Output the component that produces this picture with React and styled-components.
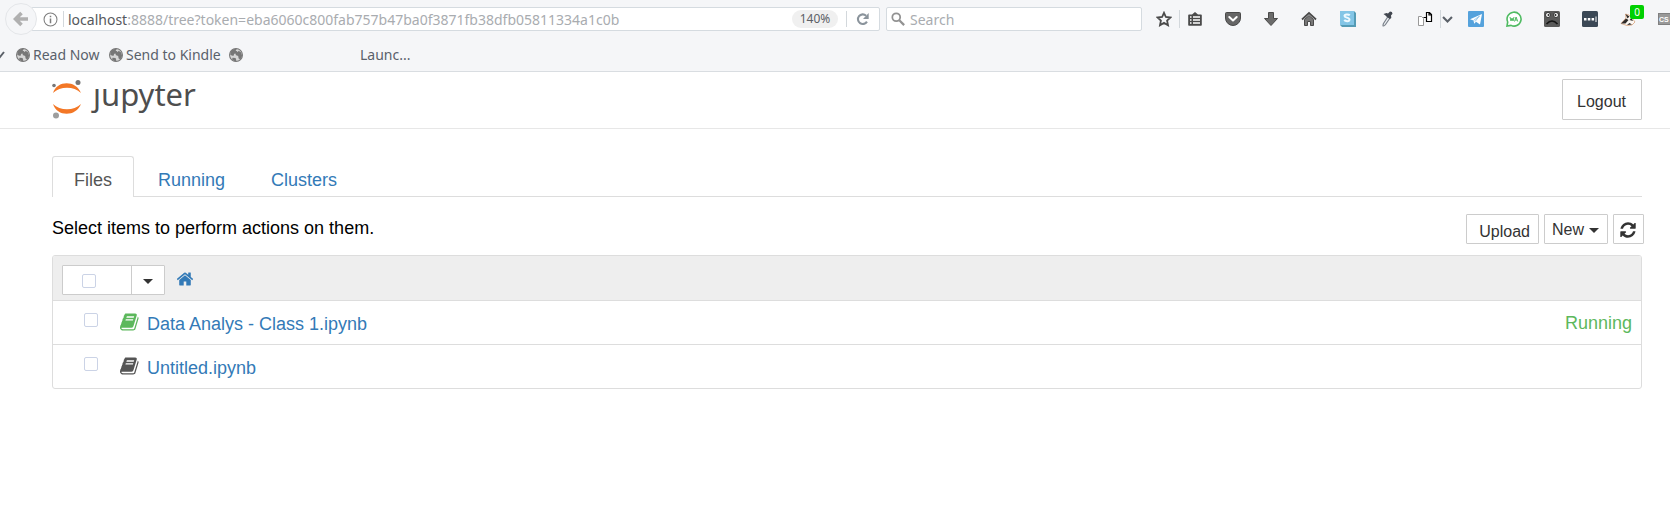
import React from "react";
import styled, { createGlobalStyle, css } from "styled-components";

const GlobalStyle = createGlobalStyle`
  * { box-sizing: border-box; }
  body { margin: 0; background: #fff; font-family: "Liberation Sans", Arial, sans-serif; font-size: 18px; color: #000; }
  button, input { font-family: inherit; margin: 0; }
  a { text-decoration: none; }
  svg { display: block; flex: none; }
`;

/* ---------- browser chrome ---------- */

const Chrome = styled.div`
  height: 72px;
  background: #f5f6f8;
  border-bottom: 1px solid #d9dde1;
  font-family: "Noto Sans", sans-serif;
  font-size: 14px;
  color: #5a616b;
  overflow: hidden;
`;

const NavBar = styled.div`
  display: flex;
  align-items: center;
  height: 38px;
  padding-left: 5px;
`;

const BackButton = styled.button`
  display: grid;
  place-items: center;
  flex: none;
  width: 32px;
  height: 32px;
  padding: 0;
  margin-right: -6px;
  border: 1px solid #e4e6e9;
  border-radius: 50%;
  background: #f5f6f8;
  z-index: 1;
`;

const Field = styled.div`
  display: flex;
  align-items: center;
  height: 24px;
  border: 1px solid #d5dbe0;
  border-radius: 2px;
  background: #fff;
`;

const AddressField = styled(Field)`
  flex: 836 1 0;
  padding-left: 11px;
  min-width: 0;
`;

const SearchField = styled(Field)`
  flex: 250 1 0;
  margin-left: 6px;
  padding-left: 4px;
  gap: 5px;
  min-width: 0;
`;

const Divider = styled.span`
  flex: none;
  width: 1px;
  height: ${(p) => p.$h || 16}px;
  background: #d3d8dc;
`;

const Address = styled.div`
  flex: 1;
  min-width: 0;
  padding-left: 5px;
  margin-left: 5px;
  background: linear-gradient(#d3d8dc, #d3d8dc) no-repeat left center / 1px 16px;
  overflow: hidden;
  white-space: nowrap;
  color: #a9acb0;
`;

const Host = styled.span`
  color: #55585c;
`;

const ZoomBadge = styled.button`
  width: 46px;
  height: 18px;
  padding: 0;
  margin-right: 8px;
  border: 0;
  border-radius: 9px;
  background: #f0f0f0;
  color: #5c6066;
  font-size: 12px;
  line-height: 18px;
`;

const PlainButton = styled.button`
  display: grid;
  place-items: center;
  flex: none;
  width: ${(p) => p.$w || 16}px;
  height: 24px;
  padding: 0;
  border: 0;
  background: none;
  position: relative;
`;

const SearchInput = styled.input`
  flex: 1;
  min-width: 0;
  padding: 0;
  border: 0;
  outline: 0;
  background: none;
  font-size: 14px;
  &::placeholder { color: #a9acb0; opacity: 1; }
`;

const Extensions = styled.div`
  display: flex;
  align-items: center;
  flex: none;
  gap: 22px;
  width: 528px;
  padding-left: 14px;
  overflow: hidden;
  height: 38px;
`;

const Pair = styled.div`
  display: flex;
  align-items: center;
  gap: 7px;
`;

const SplitButton = styled(Pair)`
  margin-right: -7px;
`;

const SplitMenu = styled.button`
  display: grid;
  place-items: center;
  width: 13px;
  height: 18px;
  padding: 0 0 0 1px;
  border: 0;
  border-left: 1px solid #d3d8dc;
  background: none;
`;

const Badge = styled.span`
  position: absolute;
  left: 10px;
  top: -2px;
  width: 14px;
  height: 14px;
  border-radius: 2px;
  background: #00d000;
  color: #fff;
  font-size: 10px;
  line-height: 14px;
  text-align: center;
`;

const Bookmarks = styled.nav`
  display: flex;
  align-items: center;
  height: 33px;
`;

const Bookmark = styled.a`
  display: flex;
  align-items: center;
  gap: 3px;
  width: ${(p) => p.$w}px;
  color: inherit;
  white-space: nowrap;
`;

/* ---------- notebook page ---------- */

const Header = styled.header`
  display: flex;
  justify-content: space-between;
  align-items: flex-start;
  height: 57px;
  padding: 0 28px 0 52px;
  border-bottom: 1px solid #e7e7e7;
`;

const Brand = styled.a`
  display: flex;
  gap: 11px;
  color: #4e4e4e;
  svg { margin-top: 7px; }
`;

/* The wordmark's first letter has no dot: the planet of the mark stands for it. */
const Wordmark = styled.span`
  position: relative;
  font-family: "Noto Sans", sans-serif;
  font-size: 31px;
  line-height: 44px;
  &::before {
    content: "";
    position: absolute;
    left: 0;
    top: 7px;
    width: 8px;
    height: 8px;
    background: #fff;
  }
`;

const box = css`
  border: 1px solid #ccc;
  border-radius: 1px;
  background: #fff;
  color: #333;
  font-size: 16px;
  padding: 0;
`;

const LogoutButton = styled.button`
  ${box}
  width: 80px;
  height: 41px;
  margin-top: 7px;
  padding: 5px 1px 0 0;
`;

const Main = styled.main`
  padding: 27px 28px 0 52px;
`;

const Tabs = styled.nav`
  display: flex;
  gap: 2px;
  height: 41px;
  border-bottom: 1px solid #ddd;
`;

const Tab = styled.a`
  height: 41px;
  padding: 4px 21px 0;
  line-height: 38px;
  border: 1px solid ${(p) => (p.$active ? "#ddd" : "transparent")};
  border-bottom: 0;
  border-radius: 3px 3px 0 0;
  background: ${(p) => (p.$active ? "#fff" : "none")};
  color: ${(p) => (p.$active ? "#555" : "#337ab7")};
`;

const Toolbar = styled.div`
  display: flex;
  align-items: center;
  justify-content: space-between;
  height: 30px;
  margin: 17px -2px 11px 0;
  line-height: 28px;
`;

const Hint = styled.span`
  padding-bottom: 2px;
`;

const Actions = styled.div`
  display: flex;
  gap: 5px;
`;

const ToolButton = styled.button`
  ${box}
  display: flex;
  align-items: center;
  justify-content: center;
  gap: 5px;
  width: ${(p) => p.$w}px;
  height: 30px;
  padding: 2px 1px 0 0;
`;

const UploadButton = styled(ToolButton)`
  justify-content: flex-end;
  padding: 6px 8px 0 0;
`;

const Caret = styled.span`
  border: 5px solid transparent;
  border-top-color: #333;
  border-bottom: 0;
`;

const List = styled.section`
  border: 1px solid #ddd;
  border-radius: 3px;
  overflow: hidden;
`;

const ListHeader = styled.div`
  display: flex;
  align-items: center;
  height: 44px;
  padding-left: 9px;
  background: #eee;
  > a { padding-top: 2px; }
`;

const SelectGroup = styled.div`
  ${box}
  display: flex;
  width: 103px;
  height: 30px;
  margin: 3px 11px 0 0;
`;

const SelectAll = styled.label`
  display: flex;
  align-items: center;
  width: 69px;
  padding: 2px 0 0 19px;
  border-right: 1px solid #ccc;
`;

const CaretButton = styled.button`
  display: grid;
  place-items: center;
  flex: 1;
  padding: 4px 0 0;
  border: 0;
  background: none;
`;

const Check = styled.input`
  appearance: none;
  flex: none;
  width: 14px;
  height: 14px;
  border: 1px solid #cbd3e6;
  border-radius: 2px;
  background: #fff;
`;

const Row = styled.div`
  display: flex;
  height: 44px;
  padding: 0 9px 0 31px;
  border-top: 1px solid #ddd;
  ${Check} { margin: 12px 22px 0 0; }
  svg { margin-top: 11px; }
`;

const FileLink = styled.a`
  flex: 1;
  margin-left: 7px;
  line-height: 46px;
  color: #337ab7;
`;

const Status = styled.span`
  line-height: 44px;
  color: #5cb85c;
`;

/* ---------- drawings ---------- */

const FA = {
  book: "M1639 478q40 57 18 129l-275 906q-19 64-76.5 107.5t-122.5 43.5h-923q-77 0-148.5-53.5t-99.5-131.5q-24-67-2-127 0-4 3-27t4-37q1-8-3-21.5t-3-19.5q2-11 8-21t16.5-23.5 16.5-23.5q23-38 45-91.5t30-91.5q3-10 .5-30t-.5-28q3-11 17-28t17-23q21-36 42-92t25-90q1-9-2.5-32t.5-28q4-13 22-30.5t22-22.5q19-26 42.5-84.5t27.5-96.5q1-8-3-25.5t-2-26.5q2-8 9-18t18-23 17-21q8-12 16.5-30.5t15-35 16-36 19.5-32 26.5-23.5 36-11.5 47.5 5.5l-1 3q38-9 51-9h761q74 0 114 56t18 130l-274 906q-36 119-71.5 153.5t-128.5 34.5h-869q-27 0-38 15-11 16-1 43 24 70 144 70h923q29 0 56-15.5t35-41.5l300-987q7-22 5-57 38 15 59 43zm-1064 2q-4 13 2 22.5t20 9.5h608q13 0 25.5-9.5t16.5-22.5l21-64q4-13-2-22.5t-20-9.5h-608q-13 0-25.5 9.5t-16.5 22.5zm-83 256q-4 13 2 22.5t20 9.5h608q13 0 25.5-9.5t16.5-22.5l21-64q4-13-2-22.5t-20-9.5h-608q-13 0-25.5 9.5t-16.5 22.5z",
  home: "M1472 992v480q0 26-19 45t-45 19h-384v-384h-256v384h-384q-26 0-45-19t-19-45v-480q0-1 .5-3t.5-3l575-474 575 474q1 2 1 6zm223-69l-62 74q-8 9-21 11h-3q-13 0-21-7l-692-577-692 577q-12 8-24 7-13-2-21-11l-62-74q-8-10-7-23.5t11-21.5l719-599q32-26 76-26t76 26l244 204v-195q0-14 9-23t23-9h192q14 0 23 9t9 23v408l219 182q10 8 11 21.5t-7 23.5z",
  refresh: "M1639 1056q0 5-1 7-64 268-268 434.5t-478 166.5q-146 0-282.5-55t-243.5-157l-129 129q-19 19-45 19t-45-19-19-45v-448q0-26 19-45t45-19h448q26 0 45 19t19 45-19 45l-137 137q71 66 161 102t187 36q134 0 250-65t186-179q11-17 53-117 8-23 30-23h192q13 0 22.5 9.5t9.5 22.5zm25-800v448q0 26-19 45t-45 19h-448q-26 0-45-19t-19-45 19-45l138-138q-148-137-349-137-134 0-250 65t-186 179q-11 17-53 117-8 23-30 23h-199q-13 0-22.5-9.5t-9.5-22.5v-7q65-268 270-434.5t480-166.5q146 0 284 55.5t245 156.5l130-129q19-19 45-19t45 19 19 45z",
};

const FaIcon = ({ name, size, color }) => (
  <svg width={size} height={size} viewBox="0 0 1792 1792" fill={color} aria-hidden="true">
    <path d={FA[name]} />
  </svg>
);

const Svg = ({ size = 16, children, ...rest }) => (
  <svg width={size} height={size} viewBox="0 0 16 16" fill="none" aria-hidden="true" {...rest}>
    {children}
  </svg>
);

const Globe = () => (
  <Svg size={14}>
    <circle cx="8" cy="8" r="7.4" fill="#d6d6d6" stroke="#777" strokeWidth="1.2" />
    <path d="M1.500 5C3 2 6 .8 9 1L7.500 3l2 .8-1.500 2.700H6L5 9 1.500 8zM11 3l3 2 1 4-2 4-2-1-.5-3-3-1 1-3 2-1zM4 11l3.500.5 1 3-2 .5-3-2z" fill="#777" />
  </Svg>
);

const JupyterMark = () => (
  <svg width="30" height="40" viewBox="0 0 30 40" aria-hidden="true">
    <path d="M1 14C5 1 24 1 29 14C22 7 8 7 1 14ZM1 25C5 38 24 38 29 25C22 32 8 32 1 25Z" fill="#f37726" />
    <circle cx="26" cy="3.500" r="2.500" fill="#767677" />
    <circle cx="2" cy="6.500" r="1.800" fill="#767677" />
    <circle cx="4" cy="36.500" r="3" fill="#9e9e9e" />
  </svg>
);

const dark = "#4a4a4a";

const icons = {
  list: (
    <Svg>
      <path d="M2 3.500h3L8 1l3 2.500h3q.8 0 .8.800V14q0 .8-.8.800H2q-.8 0-.8-.8V4.300q0-.8.8-.8z" fill={dark} />
      <path d="M3 6h1.500M6 6h7M3 9h1.500M6 9h7M3 12h1.500M6 12h7" stroke="#fff" strokeWidth="1.600" />
    </Svg>
  ),
  pocket: (
    <Svg>
      <path d="M1.500 1.500h13q1 0 1 1V7a7.500 7.500 0 0 1-15 0V2.500q0-1 1-1z" fill="#666" stroke={dark} />
      <path d="M4.300 6L8 9.500 11.700 6" stroke="#fff" strokeWidth="2" strokeLinecap="round" strokeLinejoin="round" />
    </Svg>
  ),
  download: (
    <Svg>
      <path d="M5.500 1.500h5v6h4L8 14.500 1.500 7.500h4z" fill="#6b6b6b" stroke={dark} strokeLinejoin="round" />
    </Svg>
  ),
  house: (
    <Svg>
      <path d="M3.500 8.500L8 4.500l4.500 4v6h-3v-4h-3v4h-3z" fill="#777" stroke={dark} />
      <path d="M1 8.500L8 2l7 6.500" stroke={dark} strokeWidth="1.800" />
    </Svg>
  ),
};

const Skype = () => (
  <Svg>
    <path d="M0 0h14l2 2v14H2l-2-2z" fill="#549bb5" />
    <path d="M0 0h14v14H0z" fill="#83c5e6" />
    <path d="M9.800 4.300C8.500 3 4.500 3 4.500 5s5 1.300 5 3.500-4 2-5.300.500" stroke="#eef9ff" strokeWidth="2" />
  </Svg>
);

const Picker = () => (
  <Svg>
    <path d="M9 5.500L4.500 12.500q-1 2.500 0 2.500t2-1.500L11 7" fill="#eef1f5" stroke="#7b828b" strokeWidth="1.200" />
    <path d="M4.500 3l3-1L9 2.500 11 0.500q2.500 0 2.500 2.300L12 4.500 12.300 7 10.800 8 8 6 6.500 4.500z" fill="#424750" />
  </Svg>
);

const Tiles = () => (
  <Svg>
    <path d="M1.500 5.500h3l2 2v7h-5z" fill="#fff" stroke="#999" />
    <path d="M6.500 6.500h3" stroke="#000" />
    <path d="M9.500 1.500h3l2 2v7h-5zM12 1.500v2.500h2.500" fill="#fff" stroke="#000" strokeWidth="1.200" />
  </Svg>
);

const Telegram = () => (
  <Svg>
    <rect width="16" height="16" rx="1" fill="#55a2dc" />
    <path d="M2 8.300L14 3l-2 10.500-4-2.800-1.800 2-.7-3.200z" fill="#fff" />
    <path d="M5.500 9.500L11.500 5 7 10.500" stroke="#9cc9ea" />
  </Svg>
);

const WhatsApp = () => (
  <Svg>
    <path d="M1 15l.7-4A7 7 0 1 1 5 14.400z" fill="#fff" stroke="#4fbb62" strokeWidth="1.600" />
    <path d="M4 6l1 4 1-3 1 3 1-4M8.500 10.500l1.600-4.500 1.600 4.500M9 9h2.200" stroke="#4fbb62" />
  </Svg>
);

const Frown = () => (
  <Svg>
    <rect width="16" height="16" rx="1.500" fill="#5a5a5a" />
    <circle cx="4" cy="4" r="2.500" fill="#fff" stroke="#333" />
    <circle cx="12" cy="4" r="2.500" fill="#fff" stroke="#333" />
    <circle cx="4.500" cy="4" r="1" fill="#222" />
    <circle cx="11.500" cy="4" r="1" fill="#222" />
    <path d="M2.500 13Q8 7 13.500 13" stroke="#151515" strokeWidth="1.600" />
  </Svg>
);

const LastPass = () => (
  <Svg>
    <rect width="16" height="16" rx="1.500" fill="#3b4856" />
    <path d="M2 7h2.500v2.500H2zM5.800 7h2.500v2.500H5.800zM9.600 7h2.500v2.500H9.600zM13.500 5.500h1v5.500h-1z" fill="#fff" />
  </Svg>
);

const Badger = () => (
  <Svg>
    <path d="M1 12.500L6 7 5.500 3 9 4l3 3 3 4-3 3-5 .5z" fill="#fbf7f3" stroke="#d9a37c" strokeWidth=".8" />
    <path d="M5.500 3l4 2.500-2 2zM1 12.500l5-5 2.500 1.500-3 3.500zM9.500 9l2-2 1.500 3zM7 14l2.500-2 2.500 1.500z" fill="#2e2a28" />
  </Svg>
);

const CssTag = () => (
  <svg width="24" height="12" viewBox="0 0 24 12" aria-hidden="true">
    <rect x=".5" y=".5" width="23" height="11" fill="#999" stroke="#808080" />
    <text x="1" y="9" fontFamily="Liberation Sans" fontWeight="bold" fontSize="7" fill="#fff">CS</text>
  </svg>
);

const Chevron = () => (
  <Svg size={11}>
    <path d="M1.500 4.500L8 11l6.500-6.500" stroke="#5a6068" strokeWidth="3" />
  </Svg>
);

/* ---------- page ---------- */

const toolbarButtons = [
  ["Pocket", icons.pocket],
  ["Downloads", icons.download],
  ["Home", icons.house],
  ["Skype", <Skype />, 18],
  ["Colour picker", <Picker />],
];

const files = [
  { name: "Data Analys - Class 1.ipynb", running: true },
  { name: "Untitled.ipynb", running: false },
];

export default function App() {
  return (
    <>
      <GlobalStyle />
      <Chrome>
        <NavBar>
          <BackButton aria-label="Back">
            <Svg>
              <path d="M8.500 2L2.500 8l6 6M3 8h12" stroke="#b0b0b0" strokeWidth="3.600" />
            </Svg>
          </BackButton>
          <AddressField>
            <Svg size={15}>
              <circle cx="8" cy="8" r="6.900" stroke="#7d7d7d" strokeWidth="1.100" />
              <path d="M8 7v5M8 4v1.700" stroke="#7d7d7d" strokeWidth="1.600" />
            </Svg>
            <Address>
              <Host>localhost</Host>:8888/tree?token=eba6060c800fab757b47ba0f3871fb38dfb05811334a1c0b
            </Address>
            <ZoomBadge>140%</ZoomBadge>
            <Divider />
            <PlainButton $w={32} aria-label="Reload">
              <Svg size={14}>
                <path d="M12.500 11A5.500 5.500 0 1 1 11.500 4.200" stroke="#8b949c" strokeWidth="2.400" />
                <path d="M14.500 1v7H8z" fill="#8b949c" />
              </Svg>
            </PlainButton>
          </AddressField>
          <SearchField>
            <Svg size={14}>
              <circle cx="6" cy="6" r="4.500" stroke="#929292" strokeWidth="2" />
              <path d="M9.500 9.500L15 15" stroke="#929292" strokeWidth="2.600" />
            </Svg>
            <SearchInput placeholder="Search" aria-label="Search" />
          </SearchField>
          <Extensions>
            <Pair>
              <PlainButton aria-label="Bookmark this page">
                <Svg>
                  <path d="M8 1.800l1.900 4.200 4.600.5-3.400 3.100.9 4.600L8 11.900l-4 2.300.9-4.600L1.500 6.500 6.100 6z" stroke={dark} strokeWidth="1.800" />
                </Svg>
              </PlainButton>
              <Divider $h={18} />
              <PlainButton aria-label="Bookmarks">{icons.list}</PlainButton>
            </Pair>
            {toolbarButtons.map(([label, icon, width]) => (
              <PlainButton key={label} $w={width} aria-label={label}>{icon}</PlainButton>
            ))}
            <SplitButton>
              <PlainButton aria-label="Tiles"><Tiles /></PlainButton>
              <SplitMenu aria-label="More"><Chevron /></SplitMenu>
            </SplitButton>
            <PlainButton aria-label="Telegram"><Telegram /></PlainButton>
            <PlainButton aria-label="WhatsApp"><WhatsApp /></PlainButton>
            <PlainButton aria-label="Frown"><Frown /></PlainButton>
            <PlainButton aria-label="LastPass"><LastPass /></PlainButton>
            <PlainButton aria-label="Privacy Badger">
              <Badger />
              <Badge>0</Badge>
            </PlainButton>
            <PlainButton $w={24} aria-label="Style editor"><CssTag /></PlainButton>
          </Extensions>
        </NavBar>
        <Bookmarks>
          <Bookmark href="#" $w={16} aria-label="Bookmark folder">
            <svg width="5" height="8" viewBox="0 0 5 8" aria-hidden="true">
              <path d="M-3 2L0 6 4 1" fill="none" stroke="#5a6068" strokeWidth="2" />
            </svg>
          </Bookmark>
          <Bookmark href="#" $w={93}><Globe />Read Now</Bookmark>
          <Bookmark href="#" $w={120}><Globe />Send to Kindle</Bookmark>
          <Bookmark href="#" $w={131} aria-label="Bookmark"><Globe /></Bookmark>
          <Bookmark href="#">Launc...</Bookmark>
        </Bookmarks>
      </Chrome>

      <Header>
        <Brand href="#">
          <JupyterMark />
          <Wordmark>jupyter</Wordmark>
        </Brand>
        <LogoutButton>Logout</LogoutButton>
      </Header>

      <Main>
        <Tabs>
          <Tab href="#" $active>Files</Tab>
          <Tab href="#">Running</Tab>
          <Tab href="#">Clusters</Tab>
        </Tabs>
        <Toolbar>
          <Hint>Select items to perform actions on them.</Hint>
          <Actions>
            <UploadButton $w={73}>Upload</UploadButton>
            <ToolButton $w={64}>New<Caret /></ToolButton>
            <ToolButton $w={31} aria-label="Refresh">
              <FaIcon name="refresh" size={18} color="#333" />
            </ToolButton>
          </Actions>
        </Toolbar>
        <List>
          <ListHeader>
            <SelectGroup>
              <SelectAll><Check type="checkbox" aria-label="Select all" /></SelectAll>
              <CaretButton aria-label="Selection menu"><Caret /></CaretButton>
            </SelectGroup>
            <a href="#" aria-label="Home folder"><FaIcon name="home" size={18} color="#337ab7" /></a>
          </ListHeader>
          {files.map((f) => (
            <Row key={f.name}>
              <Check type="checkbox" aria-label={f.name} />
              <FaIcon name="book" size={20} color={f.running ? "#5cb85c" : "#555"} />
              <FileLink href="#">{f.name}</FileLink>
              {f.running && <Status>Running</Status>}
            </Row>
          ))}
        </List>
      </Main>
    </>
  );
}
